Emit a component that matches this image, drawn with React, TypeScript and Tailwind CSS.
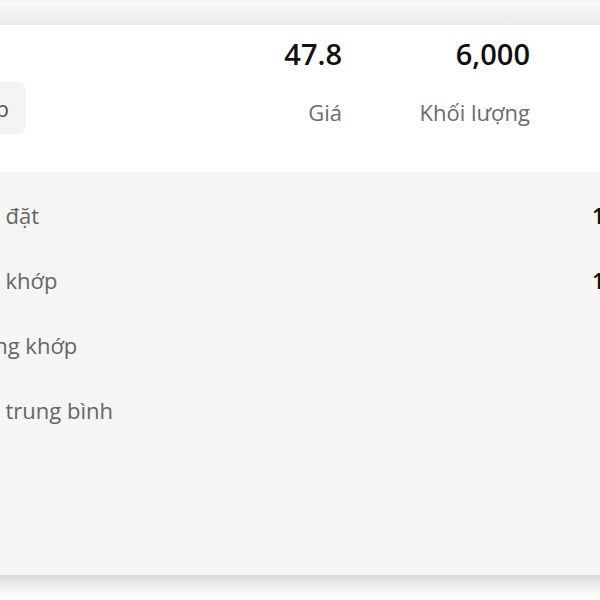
import React from 'react';

interface Row {
  label: string;
  value: string;
}

const rows: Row[] = [
  { label: 'Giá đặt', value: '10,000' },
  { label: 'Giá khớp', value: '10,000' },
  { label: 'Đang khớp', value: '0' },
  { label: 'Giá trung bình', value: '47.8' },
];

const StatColumn: React.FC<{ value: string; label: string; width: string }> = ({ value, label, width }) => (
  <div className={`flex flex-col items-end ${width}`}>
    <span className="text-[29px] leading-[34px] font-semibold text-[#111]">{value}</span>
    <span className="mt-[26px] text-[22px] leading-[30px] text-[#6b6b6b]">{label}</span>
  </div>
);

const App: React.FC = () => {
  return (
    <div
      className="w-[600px] h-[600px] overflow-hidden bg-white"
      style={{ fontFamily: '"Open Sans", "Noto Sans", sans-serif' }}
    >
      <div className="h-[25px] border-t border-[#f3f3f3] bg-linear-to-b from-[#fafafa] to-[#ececec]" />

      <div className="h-[147px] bg-white flex items-start">
        <button className="ml-[-61px] mt-[57px] h-[52px] pl-4 pr-[17px] rounded-lg bg-[#f4f4f4] text-[22px] leading-[30px] text-[#555]">
          Khớp
        </button>
        <div className="flex-1" />
        <div className="flex gap-[38px] pt-[12px] pr-[70px]">
          <StatColumn value="47.8" label="Giá" width="w-[120px]" />
          <StatColumn value="6,000" label="Khối lượng" width="w-[150px]" />
        </div>
      </div>

      <div className="h-[403px] bg-[#f5f5f5] pt-[10px] flex flex-col">
        {rows.map((row, index) => (
          <div key={index} className="h-[65px] flex items-center ml-[-34px]">
            <span className="w-[626px] shrink-0 text-[22px] leading-[30px] text-[#666]">{row.label}</span>
            <span className="w-[69px] shrink-0 text-right text-[22px] leading-[30px] font-semibold text-[#111]">
              {row.value}
            </span>
          </div>
        ))}
      </div>

      <div className="h-[25px] bg-linear-to-b from-[#d9d9d9] via-[#f0f0f0] to-white" />
    </div>
  );
};

export default App;
